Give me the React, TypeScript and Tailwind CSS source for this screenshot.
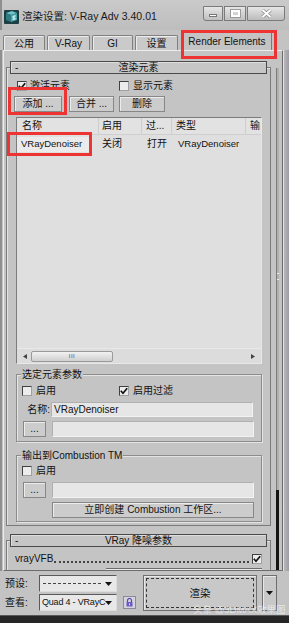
import React from "react";

function Check({ checked = false }: { checked?: boolean }) {
  return (
    <span className="w-[10px] h-[10px] shrink-0 flex items-center justify-center bg-[#ececec] border border-[#404040] border-r-[#a0a0a0] border-b-[#a0a0a0]">
      {checked ? (
        <svg width="8" height="8" viewBox="0 0 8 8">
          <path d="M0.8 3.8 L3 6.3 L7.2 1.2" fill="none" stroke="#111" strokeWidth="1.7" />
        </svg>
      ) : null}
    </span>
  );
}

function Btn({ children, cls }: { children?: React.ReactNode; cls: string }) {
  return (
    <div
      className={
        "flex items-center justify-center bg-[#cccccc] border border-[#878787] shadow-[inset_1px_1px_0_#ececec] text-[10px] leading-none text-[#151515] " +
        cls
      }
    >
      {children}
    </div>
  );
}

function Field({ children, cls }: { children?: React.ReactNode; cls: string }) {
  return (
    <div
      className={
        "flex items-center bg-[#e6e6e6] border border-[#b0b0b0] border-r-[#f2f2f2] border-b-[#f2f2f2] text-[10px] leading-none pl-[2px] " +
        cls
      }
    >
      {children}
    </div>
  );
}

function Arrow() {
  return (
    <svg width="7" height="4" viewBox="0 0 7 4" className="shrink-0">
      <path d="M0 0 H7 L3.5 4 Z" fill="#111" />
    </svg>
  );
}

function RolloutHeader({ title }: { title: string }) {
  return (
    <div className="-mt-[7px] mx-[3px] h-[13px] relative flex items-center justify-center bg-[#c6c6c6] border border-[#4a4a4a] shadow-[inset_1px_1px_0_#dedede] text-[10px] leading-none">
      <span className="absolute left-[4px] top-[1px]">-</span>
      <span>{title}</span>
    </div>
  );
}

function Group({ title, cls, children }: { title: string; cls: string; children?: React.ReactNode }) {
  return (
    <div className={"relative border border-[#8c8c8c] shadow-[inset_1px_1px_0_#e4e4e4,1px_1px_0_#e4e4e4] " + cls}>
      <span className="absolute -top-[7px] left-[4px] px-[1px] bg-[#c4c4c4] text-[10px] leading-[13px]">{title}</span>
      {children}
    </div>
  );
}

function TitleIcon() {
  return (
    <svg width="15" height="14" viewBox="0 0 15 14" className="mt-[10px] ml-[2px] shrink-0">
      <rect x="0" y="0" width="15" height="14" rx="1" fill="#1d3f44" />
      <path d="M2 3 L8 1 L13 3 L7 5 Z" fill="#6fc3c9" />
      <path d="M2 3 L7 5 L7 12 L2 10 Z" fill="#2f7d84" />
      <path d="M7 5 L13 3 L13 10 L7 12 Z" fill="#4aa3aa" />
      <path d="M8.5 6 L11.5 5 L11.5 6.5 L9.5 7.2 L11.5 7.8 L11.5 9.5 L8.5 10.3 L8.5 8.8 L10 8.4 L8.5 8 Z" fill="#c9f0f2" />
    </svg>
  );
}

function WinButtons() {
  return (
    <div className="ml-auto mr-[4px] mt-[6px] flex gap-[1px]">
      <div className="w-[20px] h-[15px] flex items-end justify-center pb-[3px] rounded-bl-[3px] bg-gradient-to-b from-[#e6e6e6] to-[#c0c0c0] border border-[#7a7a7a]">
        <span className="w-[8px] h-[3px] bg-white border border-[#777]" />
      </div>
      <div className="w-[22px] h-[15px] flex items-center justify-center bg-gradient-to-b from-[#e6e6e6] to-[#c0c0c0] border border-[#7a7a7a]">
        <span className="w-[9px] h-[7px] border-2 border-white outline outline-1 outline-[#9a9a9a]" />
      </div>
      <div className="w-[38px] h-[15px] flex items-center justify-center rounded-br-[3px] bg-gradient-to-b from-[#e6e6e6] to-[#bcbcbc] border border-[#7a7a7a]">
        <svg width="11" height="9" viewBox="0 0 11 9">
          <path d="M1.5 1 L9.5 8 M9.5 1 L1.5 8" stroke="#8a8a8a" strokeWidth="3.4" />
          <path d="M1.5 1 L9.5 8 M9.5 1 L1.5 8" stroke="#ffffff" strokeWidth="2" />
        </svg>
      </div>
    </div>
  );
}

function Tab({ label, cls, active = false }: { label: string; cls: string; active?: boolean }) {
  return (
    <div
      className={
        "flex items-center justify-center text-[10px] leading-none border border-b-0 rounded-t-[2px] shadow-[inset_1px_1px_0_#ececec] " +
        (active ? "h-[21px] -mb-[1px] bg-[#c4c4c4] border-[#7a7a7a] pt-[1px] " : "h-[15px] bg-[#cacaca] border-[#808080] pt-[1px] ") +
        cls
      }
    >
      {label}
    </div>
  );
}

export default function App() {
  return (
    <div className="relative w-[289px] h-[623px] overflow-hidden flex flex-col bg-[#c3c3c3] text-[#121212] font-['Liberation_Sans','Noto_Sans_CJK_SC',sans-serif]">
      {/* title bar */}
      <div className="h-[30px] shrink-0 flex items-start bg-gradient-to-b from-[#cacaca] to-[#bdbdbd] border-l-[2px] border-[#8f8f8f]">
        <TitleIcon />
        <span className="mt-[10px] ml-[3px] text-[10.5px] leading-[13px] text-[#1a1a1a] whitespace-nowrap">渲染设置: V-Ray Adv 3.40.01</span>
        <WinButtons />
      </div>

      {/* tabs */}
      <div className="h-[20px] shrink-0 flex items-end pl-[3px] gap-[2px] bg-[#c3c3c3]">
        <Tab label="公用" cls="w-[42px]" />
        <Tab label="V-Ray" cls="w-[43px]" />
        <Tab label="GI" cls="w-[41px]" />
        <Tab label="设置" cls="w-[43px]" />
        <Tab label="Render Elements" cls="w-[90px] ml-[2px]" active />
      </div>

      {/* body */}
      <div className="h-[521px] shrink-0 flex">
        <div className="w-[3px] shrink-0 border-l-[2px] border-[#8f8f8f]" />
        <div className="w-[280px] shrink-0 flex bg-[#c4c4c4] border-l border-t border-[#ececec] border-r border-r-[#6c6c6c] border-b border-b-[#6c6c6c]">
          {/* rollouts */}
          <div className="ml-[2px] w-[265px] shrink-0 flex flex-col overflow-hidden">
            {/* rollout 1 */}
            <div className="mt-[16px] border border-[#7a7a7a] shadow-[inset_1px_1px_0_#e2e2e2] flex flex-col pb-[3px] shrink-0">
              <RolloutHeader title="渲染元素" />
              <div className="mt-[7px] h-[10px] flex items-center pl-[10px] text-[10px] leading-none">
                <div className="w-[102px] flex items-center gap-[3px]">
                  <Check checked />
                  <span>激活元素</span>
                </div>
                <div className="flex items-center gap-[4px]">
                  <Check />
                  <span>显示元素</span>
                </div>
              </div>
              <div className="mt-[5px] h-[16px] flex pl-[7px]">
                <Btn cls="w-[48px] h-[16px]">添加 ...</Btn>
                <Btn cls="w-[45px] h-[16px] ml-[7px]">合并 ...</Btn>
                <Btn cls="w-[46px] h-[16px] ml-[5px]">删除</Btn>
              </div>
              {/* list */}
              <div className="mt-[5px] ml-[9px] w-[246px] h-[247px] flex flex-col bg-[#dfdfdf] border border-[#7c7c7c] border-r-[#e8e8e8] border-b-[#e8e8e8] text-[10px] leading-none">
                <div className="h-[17px] shrink-0 flex bg-[#e2e2e2] border-b border-[#cfcfcf]">
                  <div className="w-[82px] pl-[5px] flex items-center border-r border-[#cdcdcd]">名称</div>
                  <div className="w-[43px] pl-[3px] flex items-center border-r border-[#cdcdcd]">启用</div>
                  <div className="w-[30px] pl-[4px] flex items-center border-r border-[#cdcdcd]">过...</div>
                  <div className="w-[74px] pl-[4px] flex items-center border-r border-[#cdcdcd]">类型</div>
                  <div className="flex-1 pl-[4px] flex items-center overflow-hidden">输</div>
                </div>
                <div className="h-[16px] mt-[1px] shrink-0 flex items-center">
                  <div className="w-[72px] h-[15px] flex items-center pl-[4px] bg-[#ebebeb] text-[9.5px]">VRayDenoiser</div>
                  <div className="w-[10px]" />
                  <div className="w-[44px] pl-[3px]">关闭</div>
                  <div className="w-[30px] pl-[4px]">打开</div>
                  <div className="pl-[5px] text-[9.5px]">VRayDenoiser</div>
                </div>
                <div className="flex-1" />
                <div className="h-[15px] shrink-0 flex items-center bg-[#dcdcdc] border-t border-[#e9e9e9]">
                  <svg width="4" height="5" viewBox="0 0 4 5" className="ml-[6px]">
                    <path d="M4 0 V5 L0 2.5 Z" fill="#444" />
                  </svg>
                  <div className="ml-[4px] w-[82px] h-[11px] flex items-center justify-center bg-gradient-to-b from-[#f2f2f2] to-[#cfcfcf] border border-[#9a9a9a] rounded-[2px] text-[6px] text-[#555] tracking-[0.5px]">
                    III
                  </div>
                  <div className="flex-1" />
                  <svg width="4" height="5" viewBox="0 0 4 5" className="mr-[6px]">
                    <path d="M0 0 V5 L4 2.5 Z" fill="#444" />
                  </svg>
                </div>
              </div>
              {/* group 1 */}
              <Group title="选定元素参数" cls="mt-[10px] ml-[9px] w-[246px] flex flex-col pb-[4px]">
                <div className="mt-[11px] h-[10px] flex items-center pl-[5px] text-[10px] leading-none">
                  <div className="w-[97px] flex items-center gap-[4px]">
                    <Check />
                    <span>启用</span>
                  </div>
                  <div className="flex items-center gap-[4px]">
                    <Check checked />
                    <span>启用过滤</span>
                  </div>
                </div>
                <div className="mt-[6px] h-[15px] flex items-center">
                  <span className="w-[34px] text-right pr-[1px] text-[10px] leading-none">名称:</span>
                  <Field cls="w-[202px] h-[15px]">VRayDenoiser</Field>
                </div>
                <div className="mt-[4px] h-[16px] flex items-center">
                  <Btn cls="ml-[6px] w-[23px] h-[16px]">...</Btn>
                  <Field cls="ml-[6px] w-[202px] h-[16px]" />
                </div>
              </Group>
              {/* group 2 */}
              <Group title="输出到Combustion  TM" cls="mt-[13px] ml-[9px] w-[246px] flex flex-col pb-[3px]">
                <div className="mt-[10px] h-[10px] flex items-center pl-[5px] gap-[4px] text-[10px] leading-none">
                  <Check />
                  <span>启用</span>
                </div>
                <div className="mt-[6px] h-[16px] flex items-center">
                  <Btn cls="ml-[6px] w-[23px] h-[16px]">...</Btn>
                  <Field cls="ml-[6px] w-[202px] h-[16px]" />
                </div>
                <Btn cls="mt-[4px] ml-[35px] w-[202px] h-[16px]">立即创建 Combustion 工作区...</Btn>
              </Group>
            </div>
            {/* rollout 2 */}
            <div className="mt-[14px] border border-[#7a7a7a] shadow-[inset_1px_1px_0_#e2e2e2] flex flex-col shrink-0">
              <RolloutHeader title="VRay 降噪参数" />
              <div className="mt-[7px] h-[10px] flex items-center pl-[8px] pr-[8px] text-[10px] leading-none">
                <span className="whitespace-nowrap">vrayVFB</span>
                <span className="flex-1 self-end mb-[1px] ml-[1px] h-[2px] border-b-2 border-dotted border-[#444]" />
                <span className="ml-[3px]">
                  <Check checked />
                </span>
              </div>
              <div className="mt-[4px] ml-[99px] w-[156px] h-[2px] border-t border-[#6c6c6c] border-b border-b-[#e8e8e8]" />
              <div className="h-[10px]" />
            </div>
          </div>
          {/* panel scroll indicator */}
          <div className="ml-[5px] w-[3px] shrink-0 flex flex-col">
            <div className="mt-[17px] flex-1 border-l border-[#7c7c7c] bg-[#b0b0b0] relative">
              <div className="absolute top-[205px] left-0 w-[2px] h-[7px] border-t border-b border-[#f0f0f0]" />
            </div>
            <div className="h-[80px] bg-[#141414]" />
          </div>
        </div>
        <div className="flex-1 bg-gradient-to-r from-[#b8b8ba] to-[#9e9aa6] border-l border-[#e0e0e0]" />
      </div>

      {/* bottom controls */}
      <div className="h-[44px] shrink-0 flex pt-[4px] pl-[5px] text-[10px] leading-none bg-[#c3c3c3]">
        <div className="flex flex-col gap-[2px]">
          <div className="h-[17px] flex items-center">
            <span className="w-[34px]">预设:</span>
            <div className="w-[78px] h-[17px] flex items-center justify-between pl-[3px] pr-[4px] bg-[#e8e8e8] border border-[#5a5a5a] border-r-[#dcdcdc] border-b-[#dcdcdc]">
              <span className="flex-1 mr-[4px] h-[1px] border-t border-dashed border-[#444]" />
              <Arrow />
            </div>
          </div>
          <div className="h-[17px] flex items-center">
            <span className="w-[34px]">查看:</span>
            <div className="w-[78px] h-[17px] flex items-center justify-between pl-[2px] pr-[4px] bg-[#e8e8e8] border border-[#5a5a5a] border-r-[#dcdcdc] border-b-[#dcdcdc]">
              <span className="whitespace-nowrap text-[9px] tracking-[-0.2px]">Quad 4 - VRayC</span>
              <Arrow />
            </div>
            <div className="ml-[6px] w-[13px] h-[13px] flex items-center justify-center bg-[#d4d4dc] border border-[#8a8a9a]">
              <svg width="7" height="9" viewBox="0 0 7 9">
                <path d="M1.5 4 V2.5 A2 2 0 0 1 5.5 2.5 V4" fill="none" stroke="#5646b0" strokeWidth="1.2" />
                <rect x="0.5" y="4" width="6" height="4.5" fill="#6a58c8" />
                <rect x="3" y="5.3" width="1" height="2" fill="#e0dcff" />
              </svg>
            </div>
          </div>
        </div>
        <div className="ml-[7px] w-[114px] h-[36px] flex items-center justify-center bg-[#c8c8c8] border border-[#6e6e6e] shadow-[inset_1px_1px_0_#e8e8e8] p-[2px]">
          <div className="w-full h-full flex items-center justify-center border border-dashed border-[#333] text-[10.5px]">渲染</div>
        </div>
        <div className="ml-[5px] w-[15px] h-[36px] flex items-center justify-center bg-[#c8c8c8] border border-[#6e6e6e] shadow-[inset_1px_1px_0_#e8e8e8]">
          <Arrow />
        </div>
      </div>

      {/* bottom edge */}
      <div className="flex-1 bg-[#262626] border-t border-[#585858]" />

      {/* watermark */}
      <div className="absolute left-[193px] top-[604px] text-[9.5px] leading-[12px] text-white/60 whitespace-nowrap">头条 @3DMAX效果图</div>

      {/* red highlight boxes */}
      <div className="absolute left-[181px] top-[30px] w-[96px] h-[29px] border-[3px] border-[#ee3333]" />
      <div className="absolute left-[8px] top-[87px] w-[59px] h-[28px] border-[3px] border-[#ee3333]" />
      <div className="absolute left-[7px] top-[132px] w-[85px] h-[24px] border-[3px] border-[#ee3333]" />
    </div>
  );
}
